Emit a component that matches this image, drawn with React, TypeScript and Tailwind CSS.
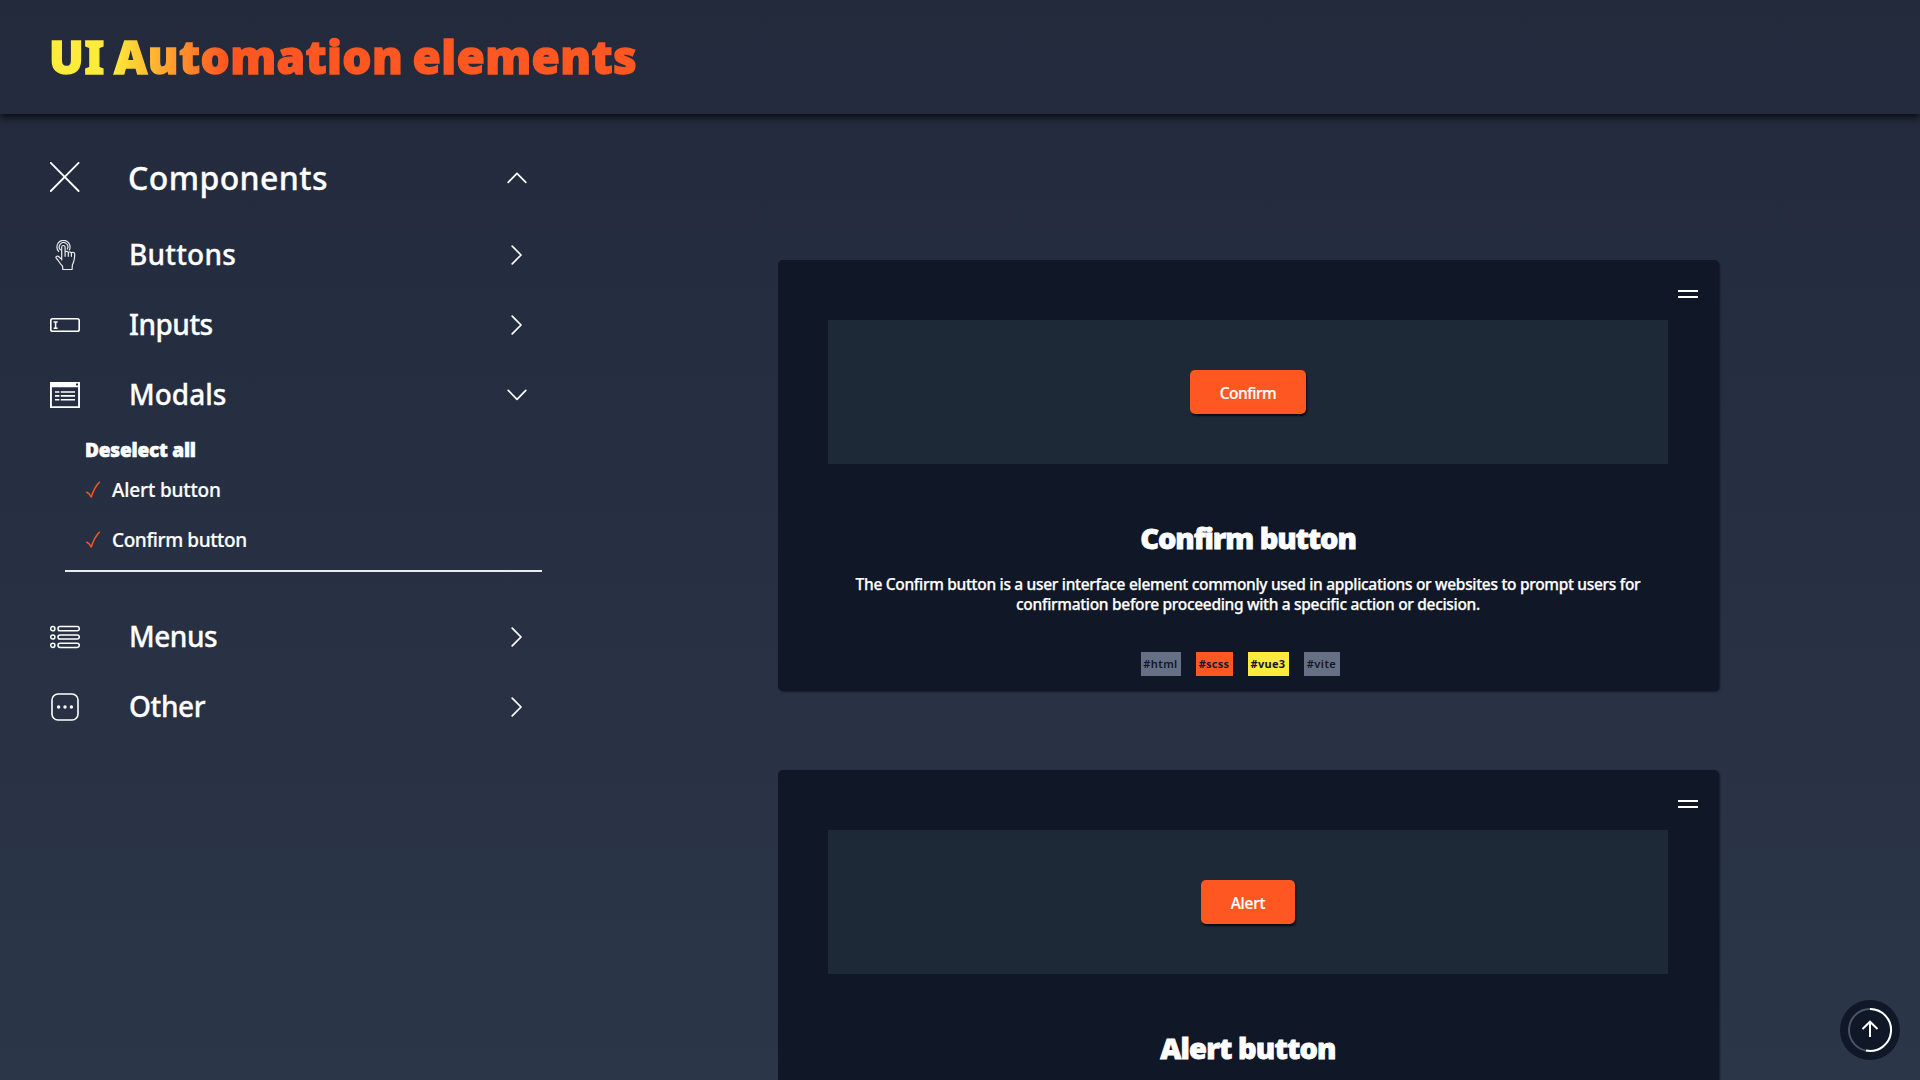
import type { ReactNode } from "react";

function HandIcon() {
  return (
    <svg width="30" height="30" viewBox="0 0 30 30" fill="none" stroke="white" strokeWidth="1.2" strokeLinejoin="round" strokeLinecap="round" opacity="0.9">
      <path d="M8.6 11.4A6.6 6.6 0 1 1 19.3 10" />
      <path d="M10.4 9.8A4.3 4.3 0 1 1 17.3 9" />
      <path d="M11.7 20V7.2a1.7 1.7 0 0 1 3.4 0V16.3M15.1 11.7c1.6-.8 3.2-.2 3.2 1.2v3.4M18.3 12.3c1.4-.7 3.1-.1 3.1 1.2v2.8M21.4 12.7c1.7-.8 3.3 0 3.3 1.4 0 4.5-.3 7.2-2.3 10.6l-.3 4.8H12.8l-.3-3.6c-2.7-1.8-3.5-5.3-6.2-7.7-1-1.1.4-2.6 1.9-1.9l3.5 3" />
    </svg>
  );
}

function InputIcon() {
  return (
    <svg width="30" height="30" viewBox="0 0 30 30" fill="none" stroke="white">
      <rect x="0.8" y="8.8" width="28.4" height="12.4" rx="1.8" strokeWidth="1.6" />
      <path d="M3.6 12h4M3.6 18.2h4M5.6 12v6.2" strokeWidth="1.5" />
    </svg>
  );
}

function ModalIcon() {
  return (
    <svg width="30" height="30" viewBox="0 0 30 30" fill="none" stroke="white">
      <path d="M0 2H30V28H0zM1.9 7.2V26.2H28.1V7.2zM26 3.6V5.4H28V3.6z" fill="white" fillRule="evenodd" stroke="none" />
      <path d="M5 12h4.4M5 15.9h4.4M5 19.8h4.4M10.8 12H25M10.8 15.9H25M10.8 19.8H25" strokeWidth="1.6" />
    </svg>
  );
}

function MenuIcon() {
  return (
    <svg width="30" height="30" viewBox="0 0 30 30" fill="none" stroke="white" strokeWidth="1.5">
      {[6.7, 15, 23.3].map((y) => (
        <g key={y}>
          <circle cx="2.8" cy={y} r="2.1" />
          <rect x="8" y={y - 2.1} width="21.3" height="4.2" rx="2.1" />
        </g>
      ))}
    </svg>
  );
}

function OtherIcon() {
  return (
    <svg width="30" height="30" viewBox="0 0 30 30" fill="none" stroke="white">
      <rect x="2" y="2" width="26" height="26" rx="6" strokeWidth="1.6" />
      <g fill="white" stroke="none">
        <circle cx="8.6" cy="15" r="1.7" />
        <circle cx="15" cy="15" r="1.7" />
        <circle cx="21.4" cy="15" r="1.7" />
      </g>
    </svg>
  );
}

const chevrons = {
  up: "M1.2 15.3L10 6.3L18.8 15.3",
  right: "M5.2 1.2L14 10L5.2 18.8",
  down: "M1.2 5.3L10 14.3L18.8 5.3",
};

function Chevron({ dir }: { dir: keyof typeof chevrons }) {
  return (
    <svg width="20" height="20" viewBox="0 0 20 20" fill="none" stroke="white" strokeWidth="1.7" strokeLinecap="round" strokeLinejoin="round">
      <path d={chevrons[dir]} />
    </svg>
  );
}

function Row({ icon, label, tracking, open }: { icon: ReactNode; label: string; tracking: string; open?: boolean }) {
  return (
    <div className="flex h-[70px] items-center">
      {icon}
      <span className={`ml-[49px] flex-1 pb-0.5 text-[28px] leading-[36px] [-webkit-text-stroke:0.3px_white] ${tracking}`}>{label}</span>
      <Chevron dir={open ? "down" : "right"} />
    </div>
  );
}

function CheckItem({ label, tracking }: { label: string; tracking: string }) {
  return (
    <div className="flex h-[50px] items-center">
      <svg width="16" height="18" viewBox="0 0 16 18" fill="none" stroke="#ff5722" strokeWidth="1.5" strokeLinecap="round" strokeLinejoin="round">
        <path d="M1.8 11.2c2 .8 3.4 2.6 4.4 4.8C8.2 9.8 10.5 5 14.4 1.2" />
      </svg>
      <span className={`ml-[11px] text-[19px] leading-6 [-webkit-text-stroke:0.2px_white] ${tracking}`}>{label}</span>
    </div>
  );
}

const tags = [
  { text: "#html", look: "w-10 bg-[#667085] font-semibold tracking-[0.4px]" },
  { text: "#scss", look: "w-[37px] bg-[#ff5722] font-bold tracking-[0.2px]" },
  { text: "#vue3", look: "w-[41px] bg-[#ffeb3b] font-bold tracking-[0.3px]" },
  { text: "#vite", look: "w-9 bg-[#667085] font-semibold tracking-[0.5px]" },
];

function Card({ button, buttonLook, title, titleLook, lines, tagged }: { button: string; buttonLook: string; title: string; titleLook: string; lines: string[]; tagged?: boolean }) {
  return (
    <article className="flex h-[431px] w-[941px] shrink-0 flex-col items-center rounded-[5px] bg-[#101726] shadow-[1px_1px_2px_rgba(0,0,0,0.5)]">
      <div className="flex h-[60px] w-full items-start justify-end pt-[30px] pr-[21px]">
        <div className="h-2 w-5 border-y-2 border-white" />
      </div>
      <div className="mr-px flex h-36 w-[840px] shrink-0 items-center justify-center bg-[#1e2938]">
        <button className={`h-11 rounded-[5px] bg-[#ff5722] pt-0.5 text-[15.5px] leading-6 font-medium shadow-[1px_2px_2px_rgba(0,0,0,0.8)] [-webkit-text-stroke:0.2px_white] ${buttonLook}`}>{button}</button>
      </div>
      <h2 className={`mt-[54px] mr-px text-[29px] leading-10 font-black [-webkit-text-stroke:0.8px_white] ${titleLook}`}>{title}</h2>
      <p className="mt-4 mr-px text-center text-[15.5px] leading-5 tracking-[-0.31px] [-webkit-text-stroke:0.25px_white]">
        {lines.map((line) => (
          <span key={line} className="block whitespace-nowrap">{line}</span>
        ))}
      </p>
      {tagged && (
        <div className="mt-[38px] mr-0.5 flex text-[11px] text-[#101726]">
          {tags.map((t) => (
            <span key={t.text} className={`mr-[15px] flex h-6 items-center justify-center ${t.look}`}>{t.text}</span>
          ))}
        </div>
      )}
    </article>
  );
}

export default function App() {
  return (
    <div className="relative flex h-[1080px] w-full flex-col overflow-hidden bg-linear-to-b from-[#222a3c] to-[#2b3648] font-['Noto_Sans',sans-serif] font-medium text-white">
      <header className="flex h-[114px] shrink-0 items-center pb-0.5 pl-[49px] shadow-[0_3px_8px_rgba(0,0,0,0.8)]">
        <h1 className="bg-[linear-gradient(90deg,#ffeb3b_64px,#ff5722_176px)] bg-clip-text text-[46px] leading-[60px] font-black tracking-[0.35px] text-transparent [-webkit-text-stroke:1.4px_transparent] [word-spacing:-3px]">UI Automation elements</h1>
      </header>
      <div className="flex min-h-0 flex-1">
        <aside className="w-[778px] shrink-0 pt-5 pr-[251px] pl-[50px]">
          <div className="flex h-[86px] items-center">
            <svg width="30" height="30" viewBox="0 0 30 30" stroke="white" strokeWidth="1.8" strokeLinecap="round">
              <path d="M0.8 0.8L28.6 29M28.6 0.8L0.8 29" />
            </svg>
            <span className="ml-12 flex-1 pt-0.5 text-[32px] leading-10 tracking-[0.41px] [-webkit-text-stroke:0.3px_white]">Components</span>
            <Chevron dir="up" />
          </div>
          <Row icon={<HandIcon />} label="Buttons" tracking="tracking-[0.2px]" />
          <Row icon={<InputIcon />} label="Inputs" tracking="tracking-[-0.5px]" />
          <Row icon={<ModalIcon />} label="Modals" tracking="tracking-[0px]" open />
          <div className="-mr-[15px] ml-[15px] border-b-2 border-[#e8eaee] pt-[5px] pb-[5px] pl-5">
            <div className="pt-px text-[19px] leading-[29px] font-black tracking-[-0.2px] [-webkit-text-stroke:0.6px_white]">Deselect all</div>
            <CheckItem label="Alert button" tracking="tracking-[-0.14px]" />
            <CheckItem label="Confirm button" tracking="tracking-[-0.4px]" />
          </div>
          <div className="mt-[30px]">
            <Row icon={<MenuIcon />} label="Menus" tracking="tracking-[-0.47px]" />
            <Row icon={<OtherIcon />} label="Other" tracking="tracking-[-0.4px]" />
          </div>
        </aside>
        <main className="flex flex-col gap-[79px] pt-[146px]">
          <Card
            button="Confirm"
            buttonLook="w-[116px] tracking-[-0.5px]"
            title="Confirm button"
            titleLook="tracking-[-1.1px]"
            lines={[
              "The Confirm button is a user interface element commonly used in applications or websites to prompt users for",
              "confirmation before proceeding with a specific action or decision.",
            ]}
            tagged
          />
          <Card button="Alert" buttonLook="w-[94px] tracking-[-0.2px]" title="Alert button" titleLook="tracking-[-0.85px]" lines={[]} />
        </main>
      </div>
      <button className="absolute right-5 bottom-5 size-[60px] rounded-full bg-[#101726]">
        <svg width="60" height="60" viewBox="0 0 60 60" fill="none" stroke="white" strokeWidth="2">
          <circle cx="30" cy="30" r="21" stroke="#4a5568" />
          <path d="M30 9A21 21 0 1 1 26 50.6" />
          <path d="M30 37V22M22.5 29L30 21.7L37.5 29" />
        </svg>
      </button>
    </div>
  );
}
